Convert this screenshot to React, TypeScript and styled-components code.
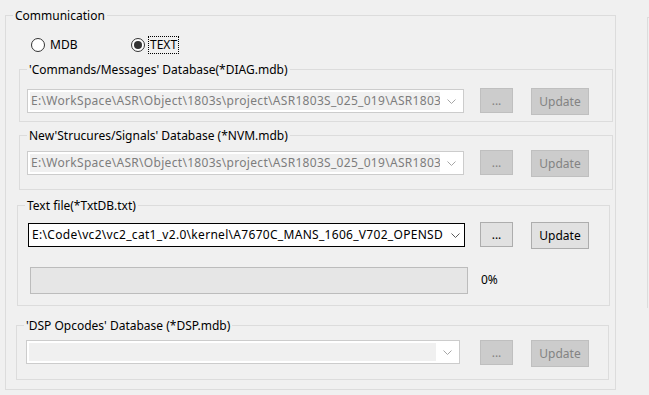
import styled, { createGlobalStyle } from "styled-components";

const GlobalStyle = createGlobalStyle`
  html, body {
    margin: 0;
    padding: 0;
    background: #f0f0f0;
  }
  body {
    font-family: "Noto Sans", "Liberation Sans", sans-serif;
    font-size: 12px;
    color: #000;
  }
`;

const Page = styled.div`
  display: flex;
  align-items: flex-start;
  width: 649px;
  height: 395px;
  overflow: hidden;
  box-sizing: border-box;
  padding: 8px 0 0 5px;
`;

const GroupBox = styled.fieldset<{ $width: number; $left?: number; $top?: number }>`
  box-sizing: border-box;
  width: ${p => p.$width}px;
  min-width: 0;
  margin: ${p => p.$top ?? 0}px 0 0 ${p => p.$left ?? 0}px;
  padding: 0;
  border: 1px solid #dcdcdc;
`;

const Caption = styled.legend`
  margin-left: 7px;
  padding: 0 2px;
  line-height: 15px;
  font-size: 12px;
`;

const GroupBody = styled.div<{ $pad: string }>`
  display: flex;
  flex-direction: column;
  align-items: flex-start;
  padding: ${p => p.$pad};
`;

const SidePanel = styled.div`
  flex: 1;
  height: 290px;
  margin: 9px 0 0 31px;
  border-left: 1px solid #dcdcdc;
  border-top: 1px solid #dcdcdc;
`;

const RadioRow = styled.div`
  display: flex;
  align-items: center;
  height: 18px;
  margin: 13px 0 0 25px;
`;

const RadioItem = styled.label<{ $width?: number }>`
  display: flex;
  align-items: center;
  gap: 3px;
  width: ${p => (p.$width ? `${p.$width}px` : "auto")};
`;

const RadioCircle = styled.span<{ $checked?: boolean }>`
  display: flex;
  align-items: center;
  justify-content: center;
  box-sizing: border-box;
  width: 14px;
  height: 14px;
  border: 1px solid #333;
  border-radius: 50%;
  background: #fff;
  &::after {
    content: "";
    width: 8px;
    height: 8px;
    border-radius: 50%;
    background: ${p => (p.$checked ? "#333" : "transparent")};
  }
`;

const RadioText = styled.span<{ $focused?: boolean }>`
  padding: 0 1px;
  line-height: 16px;
  border: 1px dotted ${p => (p.$focused ? "#000" : "transparent")};
`;

const FileRow = styled.div`
  display: flex;
  align-items: flex-start;
`;

const Combo = styled.div<{ $width: number; $focused?: boolean; $shift?: number }>`
  display: flex;
  box-sizing: border-box;
  width: ${p => p.$width}px;
  height: 24px;
  margin-top: ${p => p.$shift ?? 1}px;
  border: 1px solid ${p => (p.$focused ? "#000" : "#cccccc")};
  background: #fff;
`;

const ComboField = styled.div<{ $disabled?: boolean }>`
  flex: 1;
  min-width: 0;
  margin: 2px 0 2px 2px;
  padding-left: 1px;
  overflow: hidden;
  white-space: nowrap;
  line-height: 18px;
  letter-spacing: 0.3px;
  background: ${p => (p.$disabled ? "#f0f0f0" : "#fff")};
  color: ${p => (p.$disabled ? "#7d7d7d" : "#000")};
`;

const ComboArrow = styled.div<{ $width: number }>`
  display: flex;
  align-items: center;
  justify-content: center;
  width: ${p => p.$width}px;
`;

const PushButton = styled.button<{ $width: number; $height: number; $gap: number }>`
  box-sizing: border-box;
  width: ${p => p.$width}px;
  height: ${p => p.$height}px;
  margin-left: ${p => p.$gap}px;
  padding: 0;
  font: inherit;
  font-size: 12px;
  color: #000;
  background: #e1e1e1;
  border: 1px solid #adadad;
  &:disabled {
    color: #838383;
    background: #cccccc;
    border-color: #bfbfbf;
  }
`;

const ProgressRow = styled.div`
  display: flex;
  align-items: center;
  margin: 18px 0 0 2px;
`;

const ProgressTrack = styled.div`
  box-sizing: border-box;
  width: 438px;
  height: 27px;
  border: 1px solid #bcbcbc;
  background: #e6e6e6;
`;

const Percent = styled.span`
  margin-left: 13px;
  margin-top: -3px;
`;

const Chevron = ({ color }: { color: string }) => (
  <svg width="9" height="5" viewBox="0 0 9 5">
    <path d="M0.5 0.5 L4.5 4.5 L8.5 0.5" fill="none" stroke={color} strokeWidth="1" />
  </svg>
);

type PickerProps = {
  path: string;
  comboWidth: number;
  browseGap: number;
  enabled?: boolean;
  shift?: number;
};

const FilePicker = ({ path, comboWidth, browseGap, enabled, shift }: PickerProps) => (
  <FileRow>
    <Combo $width={comboWidth} $focused={enabled} $shift={shift}>
      <ComboField $disabled={!enabled}>{path}</ComboField>
      <ComboArrow $width={enabled ? 18 : 23}>
        <Chevron color={enabled ? "#5a5a5a" : "#a6a6a6"} />
      </ComboArrow>
    </Combo>
    <PushButton $width={33} $height={25} $gap={browseGap} disabled={!enabled}>
      ...
    </PushButton>
    <PushButton $width={58} $height={27} $gap={18} disabled={!enabled}>
      Update
    </PushButton>
  </FileRow>
);

const asrPath = "E:\\WorkSpace\\ASR\\Object\\1803s\\project\\ASR1803S_025_019\\ASR1803S_025_019.mdb";
const txtPath = "E:\\Code\\vc2\\vc2_cat1_v2.0\\kernel\\A7670C_MANS_1606_V702_OPENSD";

export default function App() {
  return (
    <>
      <GlobalStyle />
      <Page>
        <GroupBox $width={611}>
          <Caption>Communication</Caption>
          <GroupBody $pad="0 0 9px 0">
            <RadioRow>
              <RadioItem $width={100}>
                <RadioCircle />
                <RadioText>MDB</RadioText>
              </RadioItem>
              <RadioItem>
                <RadioCircle $checked />
                <RadioText $focused>TEXT</RadioText>
              </RadioItem>
            </RadioRow>

            <GroupBox $width={594} $left={13} $top={8}>
              <Caption>'Commands/Messages' Database(*DIAG.mdb)</Caption>
              <GroupBody $pad="11px 0 6px 7px">
                <FilePicker path={asrPath} comboWidth={437} browseGap={16} />
              </GroupBody>
            </GroupBox>

            <GroupBox $width={594} $left={13} $top={6}>
              <Caption>New'Strucures/Signals' Database (*NVM.mdb)</Caption>
              <GroupBody $pad="7px 0 12px 7px">
                <FilePicker path={asrPath} comboWidth={437} browseGap={16} />
              </GroupBody>
            </GroupBox>

            <GroupBox $width={593} $left={11} $top={8}>
              <Caption>Text file(*TxtDB.txt)</Caption>
              <GroupBody $pad="9px 0 11px 10px">
                <FilePicker path={txtPath} comboWidth={437} browseGap={15} enabled />
                <ProgressRow>
                  <ProgressTrack />
                  <Percent>0%</Percent>
                </ProgressRow>
              </GroupBody>
            </GroupBox>

            <GroupBox $width={593} $left={10} $top={12}>
              <Caption>'DSP Opcodes' Database (*DSP.mdb)</Caption>
              <GroupBody $pad="7px 0 12px 9px">
                <FilePicker path="" comboWidth={434} browseGap={20} shift={0} />
              </GroupBody>
            </GroupBox>
          </GroupBody>
        </GroupBox>
        <SidePanel />
      </Page>
    </>
  );
}
